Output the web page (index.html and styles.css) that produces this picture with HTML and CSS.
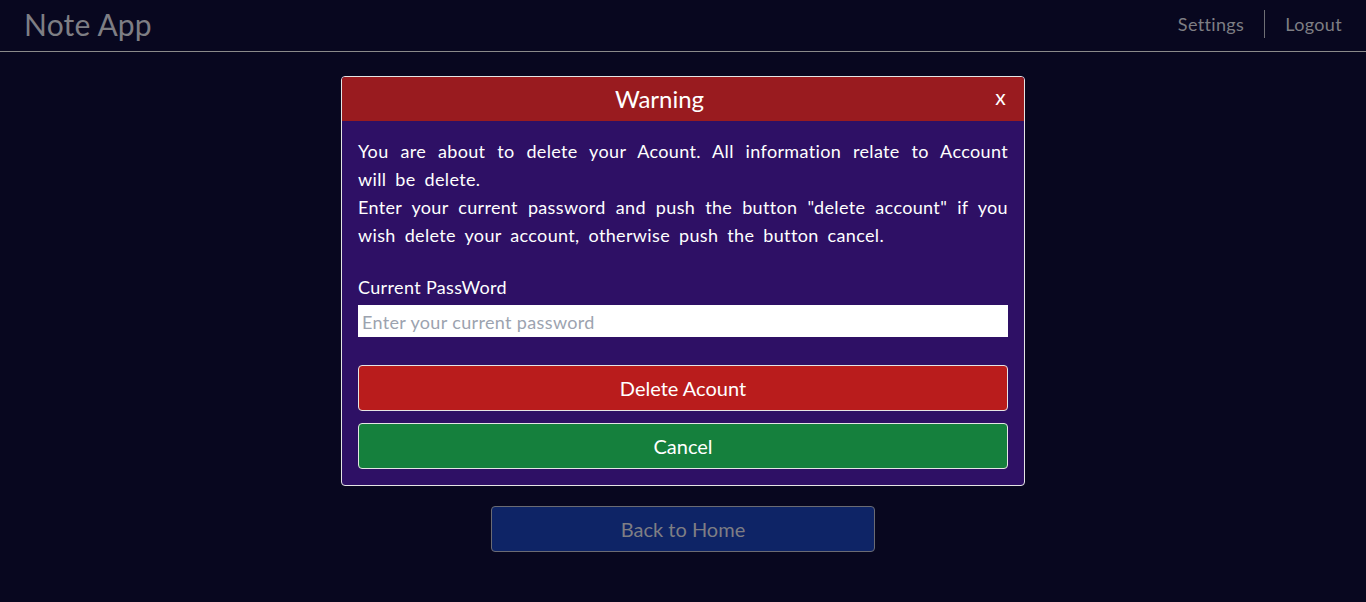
FILE: index.html
```html
<!DOCTYPE html>
<html lang="en">
<head>
<meta charset="utf-8">
<title>Note App</title>
<link rel="stylesheet" href="styles.css">
</head>
<body>
<header class="topbar">
  <div class="brand">Note App</div>
  <nav class="nav">
    <a class="nav-link" href="#">Settings</a>
    <span class="nav-sep"></span>
    <a class="nav-link" href="#">Logout</a>
  </nav>
</header>
<main class="main">
  <section class="modal">
    <div class="modal-head">
      <h2 class="modal-title">Warning</h2>
      <button class="modal-close">x</button>
    </div>
    <div class="modal-body">
      <p class="modal-text">You are about to delete your Acount. All information relate to Account will be delete.<br>Enter your current password and push the button "delete account" if you wish delete your account, otherwise push the button cancel.</p>
      <label class="field-label" for="pw">Current PassWord</label>
      <input id="pw" class="field-input" type="password" placeholder="Enter your current password">
      <button class="btn btn-delete">Delete Acount</button>
      <button class="btn btn-cancel">Cancel</button>
    </div>
  </section>
  <button class="btn-home">Back to Home</button>
</main>
</body>
</html>
```

FILE: styles.css
```css
* { box-sizing: border-box; }
html, body { margin: 0; padding: 0; }
body {
  background: #08071f;
  font-family: Lato, "Open Sans", sans-serif;
  color: #fff;
  min-height: 602px;
}
.topbar {
  height: 52px;
  border-bottom: 1px solid #8a8a8a;
  display: flex;
  align-items: center;
  justify-content: space-between;
  padding: 0 24px 3px;
}
.brand {
  font-size: 30px;
  color: #7e7e84;
  line-height: 36px;
  letter-spacing: 0.2px;
}
.nav {
  display: flex;
  align-items: center;
}
.nav-link {
  color: #7e7e84;
  text-decoration: none;
  font-size: 18px;
  line-height: 28px;
  letter-spacing: 0.35px;
}
.nav-sep {
  width: 1px;
  height: 28px;
  background: #6f6f75;
  margin: 0 20px;
}
.main {
  display: flex;
  flex-direction: column;
  align-items: center;
  padding-top: 24px;
}
.modal {
  width: 684px;
  border: 1px solid #e5e5e5;
  border-radius: 4px;
  background: #2e1065;
  overflow: hidden;
}
.modal-head {
  background: #991b1f;
  height: 44px;
  display: flex;
  align-items: center;
}
.modal-title {
  flex: 1;
  margin: 0;
  text-align: center;
  font-weight: 400;
  font-size: 24px;
  line-height: 32px;
}
.modal-close {
  width: 47px;
  height: 44px;
  background: none;
  border: 0;
  color: #fff;
  font-family: inherit;
  font-size: 21px;
  font-weight: 400;
  line-height: 24px;
  padding: 0 0 4px;
}
.modal-body {
  padding: 16px 16px 16px;
  display: flex;
  flex-direction: column;
}
.modal-text {
  margin: 0 0 24px;
  font-size: 18px;
  line-height: 28px;
  text-align: justify;
  letter-spacing: 0.35px;
  word-spacing: 4px;
}
.field-label {
  font-size: 18px;
  line-height: 28px;
  margin-bottom: 4px;
  letter-spacing: 0.35px;
}
.field-input {
  height: 32px;
  border: 0;
  background: #fff;
  font-family: inherit;
  font-size: 18px;
  letter-spacing: 0.35px;
  padding: 2px 4px 0;
  margin-bottom: 28px;
  outline: none;
}
.field-input::placeholder { color: #9ca3af; }
.btn {
  height: 46px;
  border: 1px solid #e5e5e5;
  border-radius: 4px;
  color: #fff;
  font-family: inherit;
  font-size: 20px;
  padding-top: 0;
}
.btn-delete { background: #b91c1c; margin-bottom: 12px; }
.btn-cancel { background: #15803d; }
.btn-home {
  margin-top: 20px;
  width: 384px;
  height: 46px;
  background: #0e2466;
  border: 1px solid #6b6b73;
  border-radius: 4px;
  color: #7e7e84;
  font-family: inherit;
  font-size: 20px;
  padding-top: 0;
}
```
